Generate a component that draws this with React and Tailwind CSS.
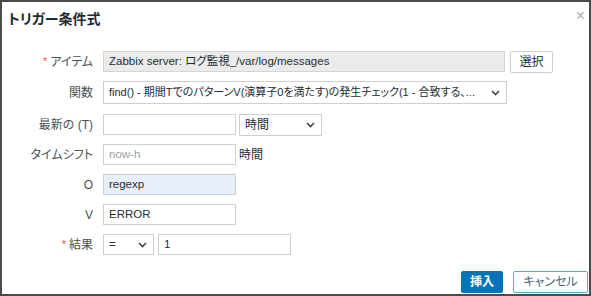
import React from "react";

const font = { fontFamily: '"Liberation Sans", "Noto Sans CJK JP", Arial, sans-serif' };

function Chevron() {
  return (
    <svg width="9" height="6" viewBox="0 0 9 6" className="shrink-0">
      <path d="M1 1 L4.5 4.5 L8 1" fill="none" stroke="#3b4650" strokeWidth="1.6" />
    </svg>
  );
}

function Label({ children, req }) {
  return (
    <div className="w-[91px] shrink-0 flex justify-end items-center text-[12px] text-[#4a4f54] pr-0">
      {req && <span className="text-[#e45959] mr-[3px] text-[11px] leading-none">*</span>}
      {children}
    </div>
  );
}

export default function App() {
  return (
    <div className="w-[591px] h-[296px] bg-white border-2 border-[#4b4b4b] flex flex-col text-[#1f2c33] [font-feature-settings:'palt']" style={font}>
      <div className="flex items-start justify-between h-[49px]">
        <div className="pl-[6px] pt-[7px] text-[14px] font-bold text-[#1f2c33]">トリガー条件式</div>
        <div className="pr-[4px] pt-[6px] text-[16px] leading-none text-[#aab0b5]">×</div>
      </div>
      <div className="flex flex-col gap-[9px]">
        <div className="flex items-center h-[21px] gap-[10px]">
          <Label req>アイテム</Label>
          <div className="w-[402px] h-[21px] bg-[#ebebeb] border border-[#d4d4d4] flex items-center px-[5px] text-[11.5px] text-[#1f2c33] whitespace-nowrap overflow-hidden">
            Zabbix server: ログ監視_/var/log/messages
          </div>
          <div className="-ml-[5px] w-[43px] h-[22px] border border-[#cfcfcf] bg-white rounded-[2px] flex items-center justify-center text-[12px] text-[#1f2c33]">
            選択
          </div>
        </div>
        <div className="flex items-center h-[23px] mb-[1px] gap-[10px]">
          <Label>関数</Label>
          <div className="w-[404px] h-[23px] border border-[#cfcfcf] flex items-center justify-between gap-[6px] pl-[5px] pr-[6px] text-[11px] text-[#1f2c33] whitespace-nowrap overflow-hidden">
            <span className="overflow-hidden">find() - 期間TでのパターンV(演算子0を満たす)の発生チェック(1 - 合致する、...</span>
            <Chevron />
          </div>
        </div>
        <div className="flex items-center h-[21px] gap-[10px]">
          <Label>最新の (T)</Label>
          <div className="w-[133px] h-[21px] border border-[#cfcfcf]" />
          <div className="-ml-[7px] w-[83px] h-[22px] border border-[#cfcfcf] flex items-center justify-between pl-[5px] pr-[6px] text-[12px]">
            <span>時間</span>
            <Chevron />
          </div>
        </div>
        <div className="flex items-center h-[21px] gap-[10px]">
          <Label>タイムシフト</Label>
          <div className="w-[133px] h-[21px] border border-[#cfcfcf] flex items-center px-[5px] text-[11.5px] text-[#9aa0a4]">now-h</div>
          <span className="-ml-[7px] text-[12px]">時間</span>
        </div>
        <div className="flex items-center h-[21px] gap-[10px]">
          <Label>O</Label>
          <div className="w-[133px] h-[21px] border border-[#cfcfcf] bg-[#e8f0fe] flex items-center px-[5px] text-[11.5px]">regexp</div>
        </div>
        <div className="flex items-center h-[21px] gap-[10px]">
          <Label>V</Label>
          <div className="w-[133px] h-[21px] border border-[#cfcfcf] flex items-center px-[5px] text-[11.5px]">ERROR</div>
        </div>
        <div className="flex items-center h-[21px] gap-[10px]">
          <Label req>結果</Label>
          <div className="w-[51px] h-[21px] border border-[#cfcfcf] flex items-center justify-between pl-[5px] pr-[6px] text-[11.5px]">
            <span>=</span>
            <Chevron />
          </div>
          <div className="-ml-[6px] w-[133px] h-[21px] border border-[#cfcfcf] flex items-center px-[5px] text-[11.5px]">1</div>
        </div>
      </div>
      <div className="mt-auto flex justify-end gap-[10px] pr-[1px] pb-[1px]">
        <div className="w-[42px] h-[22px] bg-[#0275b8] rounded-[2px] flex items-center justify-center text-[12px] font-bold text-white">挿入</div>
        <div className="w-[75px] h-[22px] border border-[#5aa6d6] rounded-[2px] bg-white flex items-center justify-center text-[12px] text-[#4c6677]">キャンセル</div>
      </div>
    </div>
  );
}
